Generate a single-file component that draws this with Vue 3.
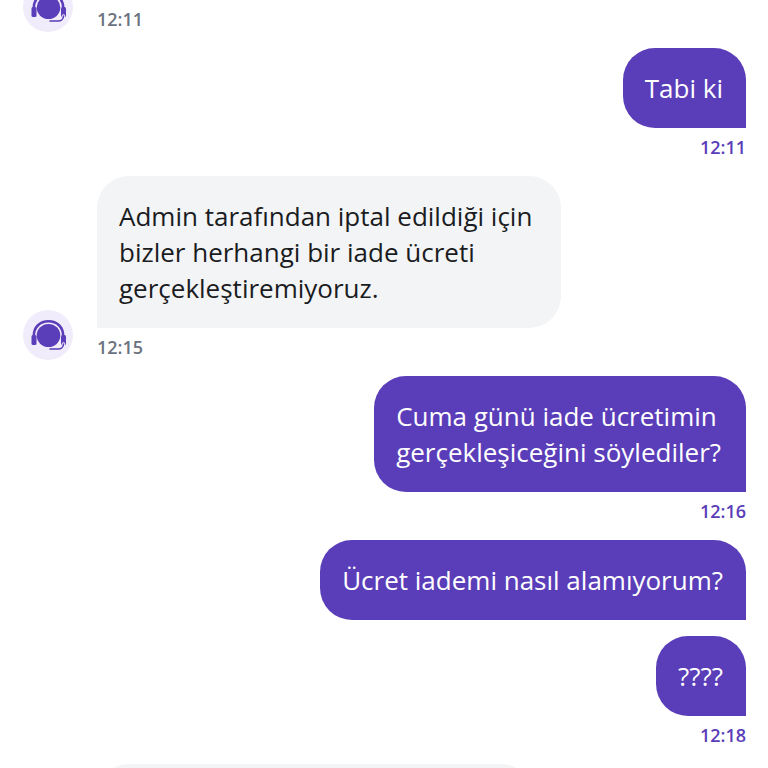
<template>
  <div class="chat">
    <div class="list">
      <div v-for="(m, i) in messages" :key="i" class="row" :class="m.mine ? 'mine' : 'theirs'">
        <div v-if="!m.mine" class="avatar" :class="{ blank: !m.time }">
          <svg v-if="m.time" viewBox="0 0 36 36" width="36" height="36">
            <ellipse cx="18.500" cy="18.500" rx="11.800" ry="11.500" fill="#5a3db8" />
            <path d="M3.800 19C3.800 10 10 4.300 18.500 4.300S33.200 10 33.200 19" fill="none" stroke="#5a3db8" stroke-width="2.600" />
            <rect x="1.500" y="18" width="5" height="10" rx="1.500" fill="#5a3db8" />
            <rect x="31" y="18" width="5" height="10" rx="1.500" fill="#5a3db8" />
            <path d="M33.500 27c0 3-2.500 5-5.500 5h-8" fill="none" stroke="#f0ecfb" stroke-width="3.400" stroke-linecap="round" />
            <path d="M33.500 27c0 3-2.500 5-5.500 5h-8" fill="none" stroke="#5a3db8" stroke-width="1.600" stroke-linecap="round" />
          </svg>
        </div>
        <div class="body">
          <div v-if="m.text" class="bubble">
            <div v-for="(line, j) in m.text" :key="j">{{ line }}</div>
          </div>
          <div v-if="m.time" class="time">{{ m.time }}</div>
        </div>
      </div>
    </div>
  </div>
</template>

<script setup>
const messages = [
  { mine: false, time: '12:11' },
  { mine: true, text: ['Tabi ki'], time: '12:11' },
  {
    mine: false,
    text: ['Admin tarafından iptal edildiği için', 'bizler herhangi bir iade ücreti', 'gerçekleştiremiyoruz.'],
    time: '12:15',
  },
  { mine: true, text: ['Cuma günü iade ücretimin', 'gerçekleşiceğini söylediler?'], time: '12:16' },
  { mine: true, text: ['Ücret iademi nasıl alamıyorum?'] },
  { mine: true, text: ['????'], time: '12:18' },
  { mine: false, text: [''] },
]
</script>

<style>
html,
body {
  margin: 0;
  background: #fff;
}
</style>

<style scoped>
.chat {
  width: 768px;
  height: 768px;
  overflow: hidden;
  background: #fff;
  font-family: 'Open Sans', sans-serif;
}

.list {
  display: flex;
  flex-direction: column;
  gap: 16px;
  padding: 0 22px 0 23px;
}

.row {
  display: flex;
  align-items: flex-end;
}

.row:first-child {
  margin-top: -18px;
}

.row:first-child .body {
  height: 50px;
  justify-content: flex-end;
}

.row:nth-child(4) .bubble {
  padding-right: 25px;
}

.row:last-child .bubble {
  width: 436px;
  height: 80px;
  box-sizing: border-box;
}

.mine {
  justify-content: flex-end;
}

.avatar {
  flex: none;
  width: 50px;
  height: 50px;
  margin-right: 24px;
  border-radius: 50%;
  background: #f0ecfb;
  display: flex;
  align-items: center;
  justify-content: center;
}

.avatar.blank {
  background: none;
}

.body {
  display: flex;
  flex-direction: column;
}

.mine .body {
  align-items: flex-end;
}

.bubble {
  padding: 22px 23px 22px 22px;
  font-size: 26px;
  line-height: 36px;
  white-space: nowrap;
  border-radius: 32px;
}

.theirs .bubble {
  width: 464px;
  box-sizing: border-box;
  background: #f3f4f6;
  color: #1a1c22;
  border-bottom-left-radius: 0;
}

.mine .bubble {
  background: #5a3db8;
  color: #fff;
  border-bottom-right-radius: 0;
}

.time {
  height: 32px;
  line-height: 38px;
  font-size: 18px;
  font-weight: 600;
}

.theirs .time {
  color: #6b7280;
}

.mine .time {
  color: #5a3db8;
}
</style>
